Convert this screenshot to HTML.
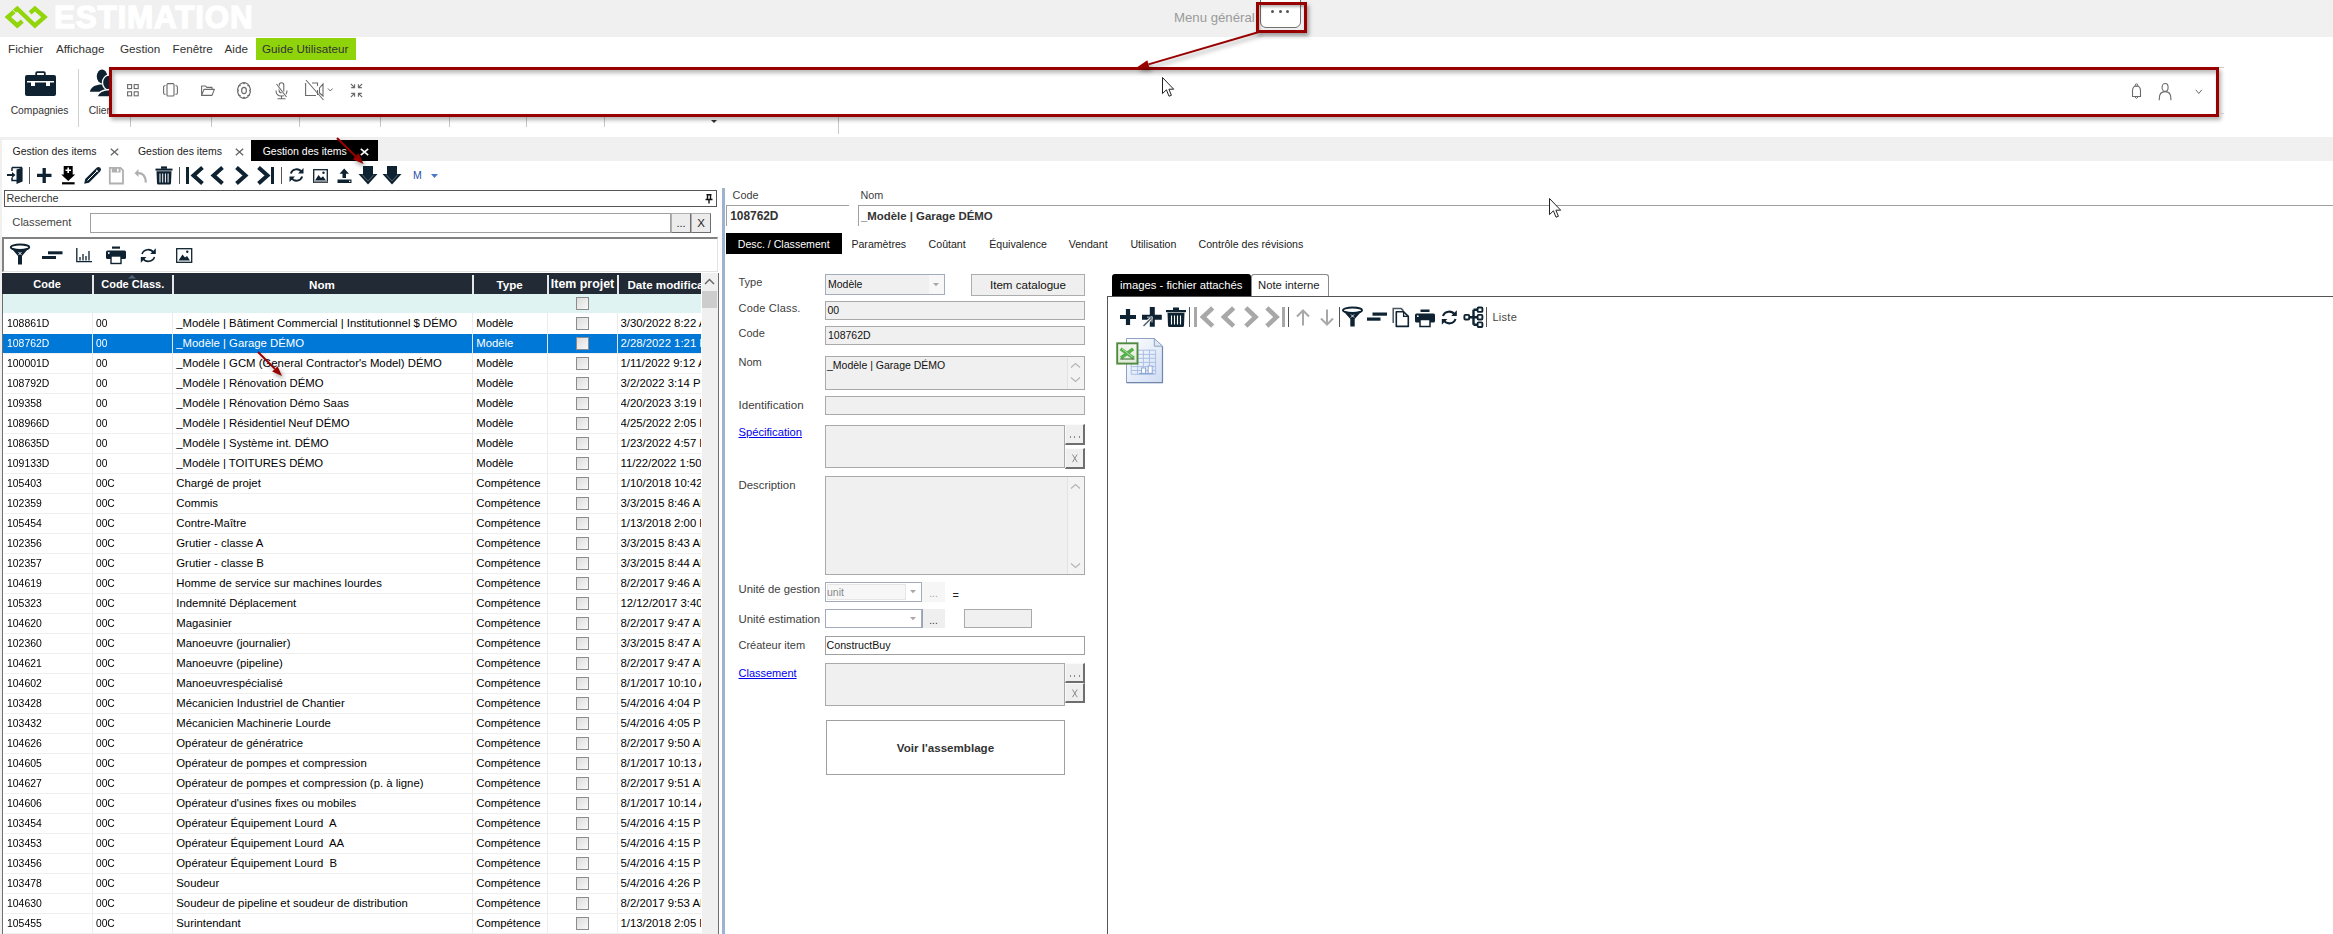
<!DOCTYPE html>
<html><head><meta charset="utf-8"><style>
html,body{margin:0;padding:0;}
body{width:2333px;height:934px;position:relative;overflow:hidden;background:#fff;font-family:"Liberation Sans",sans-serif;}
.t{position:absolute;white-space:pre;line-height:1;}
svg{overflow:visible}
</style></head><body>
<div style="position:absolute;left:0px;top:0px;width:2333px;height:37px;background:#f0f0f0"></div><svg style="position:absolute;left:0px;top:0px;" width="52" height="34" viewBox="0 0 52 34"><g fill="none" stroke="#92d50a" stroke-width="4.4" stroke-linejoin="miter" stroke-miterlimit="6"><polyline points="22.3,21.2 17.3,25.5 7.9,17.1 17.3,8.7 34.9,25.5 44.5,17.1 34.9,8.7 30.1,12.9"/></g><path d="M12.6,9.9 L16.6,13.6 M27.2,12.4 L31.4,15.8" stroke="#f0f0f0" stroke-width="0.9"/></svg><div class="t" style="left:54px;top:1.53px;font-size:31.5px;color:#ffffff;font-weight:700;-webkit-text-stroke:1.4px #fff;letter-spacing:0.75px">ESTIMATION</div><div class="t" style="left:1174px;top:10.82px;font-size:13.2px;color:#9a9a9a;font-weight:400;">Menu général</div><div style="position:absolute;left:1260px;top:-3px;width:41px;height:31px;background:#fff;border:1px solid #707070;border-radius:0 0 6px 6px;box-sizing:border-box"></div><div style="position:absolute;left:1271.0px;top:10px;width:3px;height:3px;background:#555;border-radius:50%"></div><div style="position:absolute;left:1278.5px;top:10px;width:3px;height:3px;background:#555;border-radius:50%"></div><div style="position:absolute;left:1286.0px;top:10px;width:3px;height:3px;background:#555;border-radius:50%"></div><div style="position:absolute;left:0px;top:37px;width:2333px;height:25px;background:#fff"></div><div class="t" style="left:8px;top:42.79px;font-size:11.7px;color:#333;font-weight:400;">Fichier</div><div class="t" style="left:56px;top:42.79px;font-size:11.7px;color:#333;font-weight:400;">Affichage</div><div class="t" style="left:120px;top:42.79px;font-size:11.7px;color:#333;font-weight:400;">Gestion</div><div class="t" style="left:172.5px;top:42.79px;font-size:11.7px;color:#333;font-weight:400;">Fenêtre</div><div class="t" style="left:224.5px;top:42.79px;font-size:11.7px;color:#333;font-weight:400;">Aide</div><div style="position:absolute;left:256px;top:38px;width:100px;height:22px;background:#8fd40a"></div><div class="t" style="left:262px;top:42.79px;font-size:11.7px;color:#333;font-weight:400;">Guide Utilisateur</div><div style="position:absolute;left:0px;top:62px;width:2333px;height:75px;background:#fff"></div><svg style="position:absolute;left:25px;top:71px;" width="31" height="25" viewBox="0 0 31 25"><rect x="0" y="4" width="31" height="21" rx="2" fill="#0e2231"/><rect x="11.2" y="1.1" width="8.6" height="4" rx="1" fill="none" stroke="#0e2231" stroke-width="1.8"/><rect x="2" y="10" width="27" height="1.5" fill="#fff"/><rect x="6" y="10" width="4" height="5" fill="#fff"/><rect x="21" y="10" width="4" height="5" fill="#fff"/></svg><div class="t" style="left:10.7px;top:106.08px;font-size:10.3px;color:#333;font-weight:400;">Compagnies</div><div style="position:absolute;left:78px;top:69px;width:1px;height:58px;background:#d0d0d0"></div><svg style="position:absolute;left:80px;top:62px;" width="45" height="40" viewBox="0 0 45 40"><ellipse cx="22" cy="14.4" rx="5.2" ry="7" fill="#0e2231"/><path d="M9.8,29.8 C11.5,24.5 16,22.6 22,22.6 C28,22.6 32,24.5 34,29.8 Z" fill="#0e2231"/><ellipse cx="28.8" cy="20.6" rx="6.3" ry="7.4" fill="#0e2231" stroke="#fff" stroke-width="1.3"/><path d="M16.6,35 C18.5,29.5 23.5,27.5 30,27.5 C36.5,27.5 41.5,29.5 43.4,35 Z" fill="#0e2231" stroke="#fff" stroke-width="1.3"/></svg><div class="t" style="left:88.7px;top:106.08px;font-size:10.3px;color:#333;font-weight:400;">Clients</div><div style="position:absolute;left:130px;top:117px;width:1px;height:10px;background:#c8c8c8"></div><div style="position:absolute;left:211px;top:117px;width:1px;height:10px;background:#c8c8c8"></div><div style="position:absolute;left:299px;top:117px;width:1px;height:10px;background:#c8c8c8"></div><div style="position:absolute;left:380px;top:117px;width:1px;height:10px;background:#c8c8c8"></div><div style="position:absolute;left:449px;top:117px;width:1px;height:10px;background:#c8c8c8"></div><div style="position:absolute;left:526px;top:117px;width:1px;height:10px;background:#c8c8c8"></div><div style="position:absolute;left:604px;top:117px;width:1px;height:10px;background:#c8c8c8"></div><div style="position:absolute;left:838px;top:117px;width:1px;height:17px;background:#c8c8c8"></div><svg style="position:absolute;left:711px;top:120px;" width="6" height="4" viewBox="0 0 6 4"><path d="M0,0 L6,0 L3,3 Z" fill="#333"/></svg><div style="position:absolute;left:109px;top:67px;width:2110px;height:50px;border:3px solid #980000;box-sizing:border-box;background:#fff;box-shadow:2px 3px 4px rgba(0,0,0,0.3), inset 2px 3px 4px rgba(0,0,0,0.28)"></div><svg style="position:absolute;left:127px;top:84px;" width="12" height="13" viewBox="0 0 12 13"><rect x="0.6" y="0.6" width="4" height="4" fill="none" stroke="#6a6a6a" stroke-width="1.1"/><rect x="0.6" y="7.8" width="4" height="4" fill="none" stroke="#6a6a6a" stroke-width="1.1"/><rect x="7.2" y="0.6" width="4" height="4" fill="none" stroke="#6a6a6a" stroke-width="1.1"/><rect x="7.2" y="7.8" width="4" height="4" fill="none" stroke="#6a6a6a" stroke-width="1.1"/></svg><svg style="position:absolute;left:163px;top:83px;" width="15" height="14" viewBox="0 0 15 14"><rect x="4" y="0.6" width="7" height="12.4" rx="1" fill="none" stroke="#6a6a6a" stroke-width="1.1"/><path d="M2.5,2.5 Q0.6,2.5 0.6,4 L0.6,10 Q0.6,11.4 2.5,11.4 M12.5,2.5 Q14.4,2.5 14.4,4 L14.4,10 Q14.4,11.4 12.5,11.4" fill="none" stroke="#6a6a6a" stroke-width="1.1"/></svg><svg style="position:absolute;left:201px;top:85px;" width="14" height="11" viewBox="0 0 14 11"><path d="M0.6,10.4 L0.6,1 L4.5,1 L5.8,2.4 L11,2.4 L11,4.4 M0.6,10.4 L3,4.4 L13.4,4.4 L11,10.4 Z" fill="none" stroke="#6a6a6a" stroke-width="1.1" stroke-linejoin="round"/></svg><svg style="position:absolute;left:237px;top:82px;" width="14" height="17" viewBox="0 0 14 17"><path d="M7.74,0.59 L11.11,2.28 L11.27,3.91 L10.81,3.35 L12.16,3.54 L13.55,7.61 L12.71,8.90 L12.71,8.10 L13.55,9.39 L12.16,13.46 L10.81,13.65 L11.27,13.09 L11.11,14.72 L7.74,16.41 L6.67,15.39 L7.33,15.39 L6.26,16.41 L2.89,14.72 L2.73,13.09 L3.19,13.65 L1.84,13.46 L0.45,9.39 L1.29,8.10 L1.29,8.90 L0.45,7.61 L1.84,3.54 L3.19,3.35 L2.73,3.91 L2.89,2.28 L6.26,0.59 L7.33,1.61 L6.67,1.61 Z" fill="none" stroke="#6a6a6a" stroke-width="1.15" stroke-linejoin="round"/><ellipse cx="7" cy="8.5" rx="2.4" ry="3.1" fill="none" stroke="#6a6a6a" stroke-width="1.15"/></svg><svg style="position:absolute;left:275px;top:82px;" width="13" height="18" viewBox="0 0 13 18"><rect x="4.2" y="0.8" width="4.6" height="10" rx="2.3" fill="none" stroke="#6a6a6a" stroke-width="1.1"/><path d="M1,8.5 Q1,14 6.5,14 Q12,14 12,8.5" fill="none" stroke="#6a6a6a" stroke-width="1.1"/><path d="M6.5,14 L6.5,16.5 M2.5,16.8 L10.5,16.8" fill="none" stroke="#6a6a6a" stroke-width="1.1"/><path d="M1.5,2 L11.5,15" stroke="#fff" stroke-width="2.2"/><path d="M1.5,2 L11.5,15" stroke="#6a6a6a" stroke-width="1.1"/></svg><svg style="position:absolute;left:305px;top:79px;" width="31" height="23" viewBox="0 0 31 23"><path d="M0.6,4 L0.6,16.5 L11,16.5 M7,4 L12.5,4 L12.5,7 M12.5,11 L12.5,16 M18,5 L18,17 L14.5,14 L14.5,9 Z" fill="none" stroke="#6a6a6a" stroke-width="1.1"/><path d="M1,1 L18.5,21" stroke="#6a6a6a" stroke-width="1.1"/><path d="M23,9.5 L25.3,12 L27.6,9.5" fill="none" stroke="#6a6a6a" stroke-width="1"/></svg><svg style="position:absolute;left:350px;top:83px;" width="13" height="15" viewBox="0 0 13 15"><path d="M0.8,0.8 L4.5,4.5 M1.2,4.6 L4.6,4.6 L4.6,1.2 M12.2,0.8 L8.5,4.5 M11.8,4.6 L8.4,4.6 L8.4,1.2 M0.8,14.2 L4.5,10.5 M1.2,10.4 L4.6,10.4 L4.6,13.8 M12.2,14.2 L8.5,10.5 M11.8,10.4 L8.4,10.4 L8.4,13.8" fill="none" stroke="#6a6a6a" stroke-width="1.1"/></svg><svg style="position:absolute;left:2131px;top:83px;" width="11" height="17" viewBox="0 0 11 17"><path d="M5.5,3 Q9.5,3 9.5,8 L9.5,13.5 L1.5,13.5 L1.5,8 Q1.5,3 5.5,3 Z" fill="none" stroke="#6a6a6a" stroke-width="1.1"/><circle cx="5.5" cy="2.2" r="1.3" fill="none" stroke="#6a6a6a" stroke-width="1"/><path d="M4,14 Q5.5,16.8 7,14" fill="none" stroke="#6a6a6a" stroke-width="1"/></svg><svg style="position:absolute;left:2158px;top:82px;" width="14" height="19" viewBox="0 0 14 19"><ellipse cx="7.1" cy="5.4" rx="3" ry="3.9" fill="none" stroke="#6a6a6a" stroke-width="1.1"/><path d="M1.3,18.2 L1.3,16.5 Q1.3,9.6 7.1,9.6 Q12.9,9.6 12.9,16.5 L12.9,18.2" fill="none" stroke="#6a6a6a" stroke-width="1.1"/></svg><svg style="position:absolute;left:2194.5px;top:88.7px;" width="8" height="6" viewBox="0 0 8 6"><path d="M0.8,0.8 L3.8,4.5 L6.8,0.8" fill="none" stroke="#6a6a6a" stroke-width="1"/></svg><div style="position:absolute;left:2219px;top:67px;width:5px;height:1px;background:#ccc"></div><div style="position:absolute;left:2219px;top:113px;width:5px;height:1px;background:#ccc"></div><div style="position:absolute;left:1256px;top:2px;width:51px;height:31px;border:3px solid #980000;box-sizing:border-box;box-shadow:2px 3px 4px rgba(0,0,0,0.35), inset 1px 2px 3px rgba(0,0,0,0.3)"></div><div style="position:absolute;left:0px;top:137px;width:2333px;height:24px;background:#f0f0f0"></div><div style="position:absolute;left:2px;top:140px;width:249px;height:21px;background:#fff"></div><div class="t" style="left:12.5px;top:145.81px;font-size:10.5px;color:#222;font-weight:400;">Gestion des items</div><div class="t" style="left:137.9px;top:145.81px;font-size:10.5px;color:#222;font-weight:400;">Gestion des items</div><svg style="position:absolute;left:110px;top:148px;" width="9" height="8" viewBox="0 0 9 8"><path d="M0.8,0.8 L8.2,7.2 M8.2,0.8 L0.8,7.2" stroke="#666" stroke-width="1.3"/></svg><svg style="position:absolute;left:235px;top:148px;" width="9" height="8" viewBox="0 0 9 8"><path d="M0.8,0.8 L8.2,7.2 M8.2,0.8 L0.8,7.2" stroke="#666" stroke-width="1.3"/></svg><div style="position:absolute;left:251px;top:140px;width:127px;height:21px;background:#000"></div><div class="t" style="left:262.7px;top:145.81px;font-size:10.5px;color:#fff;font-weight:400;">Gestion des items</div><svg style="position:absolute;left:360px;top:148px;" width="9" height="8" viewBox="0 0 9 8"><path d="M0.8,0.8 L8.2,7.2 M8.2,0.8 L0.8,7.2" stroke="#fff" stroke-width="1.6"/></svg><div style="position:absolute;left:0px;top:161px;width:721px;height:773px;background:#fff"></div><div style="position:absolute;left:0px;top:161px;width:2px;height:773px;background:#f0f0f0"></div><svg style="position:absolute;left:7px;top:166px;" width="16" height="19" viewBox="0 0 16 19"><path d="M5,1.6 L5,5 M5,11.5 L5,14.5 L10,14.5 M5,1.6 L15,1.6" fill="none" stroke="#0e2231" stroke-width="1.5"/><path d="M9.5,3.5 L15.6,1.5 L15.6,15.5 L9.5,18 Z" fill="#0e2231"/><path d="M0,9 L6,9" stroke="#0e2231" stroke-width="2"/><path d="M5,6 L8.5,9 L5,12 Z" fill="#0e2231"/></svg><div style="position:absolute;left:29px;top:167px;width:1px;height:17px;background:#555"></div><svg style="position:absolute;left:37px;top:168px;" width="15" height="15" viewBox="0 0 15 15"><path d="M7.2,0 L7.2,15 M0,7.3 L14.5,7.3" stroke="#0e2231" stroke-width="3.3"/></svg><svg style="position:absolute;left:61px;top:166px;" width="15" height="19" viewBox="0 0 15 19"><path d="M2.7,0 L11.7,0 L11.7,8.6 L14.2,8.6 L7.2,15 L0.2,8.6 L2.7,8.6 Z" fill="#000"/><path d="M7.2,1.5 L7.2,7 M4.5,4.2 L10,4.2" stroke="#fff" stroke-width="1.6"/><rect x="1" y="16.2" width="12.6" height="2.2" fill="#000"/></svg><svg style="position:absolute;left:83px;top:166px;" width="19" height="19" viewBox="0 0 19 19"><path d="M1.2,17.8 L2.2,13 L13.6,1.8 Q15.5,0 17.3,1.8 Q19,3.6 17.2,5.4 L6,16.8 Z" fill="#0e2231"/><path d="M4.5,14.5 L14.5,4.5" stroke="#fff" stroke-width="1"/><path d="M13,3.8 L15.3,6" stroke="#fff" stroke-width="0.9"/></svg><svg style="position:absolute;left:109px;top:167px;" width="15" height="18" viewBox="0 0 15 18"><path d="M0.8,0.8 L11.5,0.8 L14,3.3 L14,16.5 L0.8,16.5 Z" fill="none" stroke="#b0b0b0" stroke-width="1.8"/><rect x="2.8" y="1" width="8.8" height="4.5" fill="#b0b0b0"/><rect x="8" y="1.8" width="1.6" height="2.8" fill="#fff"/></svg><svg style="position:absolute;left:134px;top:167px;" width="13" height="17" viewBox="0 0 13 17"><path d="M4.5,2 L0.5,6.2 L4.5,10 Z" fill="#b0b0b0"/><path d="M3.5,6.2 Q11.5,5.5 11.8,15.5" fill="none" stroke="#b0b0b0" stroke-width="2.2"/></svg><svg style="position:absolute;left:155px;top:166px;" width="18" height="19" viewBox="0 0 18 19"><rect x="0.5" y="2.6" width="17" height="2" fill="#0e2231"/><rect x="6" y="0.4" width="6" height="2.4" fill="#0e2231"/><path d="M1.5,5.2 L16.5,5.2 L16,17.2 Q16,18.4 14.8,18.4 L3.2,18.4 Q2,18.4 2,17.2 Z" fill="#0e2231"/><path d="M5,7.5 L5,16.5 M7.7,7.5 L7.7,16.5 M10.4,7.5 L10.4,16.5 M13.1,7.5 L13.1,16.5" stroke="#fff" stroke-width="1"/></svg><div style="position:absolute;left:179px;top:167px;width:1px;height:17px;background:#555"></div><svg style="position:absolute;left:186px;top:167px;" width="18" height="17" viewBox="0 0 18 17"><rect x="0" y="0" width="3" height="17" fill="#0e2231"/><path d="M15,1.8 L7.5,8.5 L15,15.2" fill="none" stroke="#0e2231" stroke-width="4.0" stroke-linecap="square"/></svg><svg style="position:absolute;left:211px;top:167px;" width="13" height="17" viewBox="0 0 13 17"><path d="M10,1.8 L2.5,8.5 L10,15.2" fill="none" stroke="#0e2231" stroke-width="4.0" stroke-linecap="square"/></svg><svg style="position:absolute;left:236px;top:167px;" width="12" height="17" viewBox="0 0 12 17"><path d="M2,1.8 L9.5,8.5 L2,15.2" fill="none" stroke="#0e2231" stroke-width="4.0" stroke-linecap="square"/></svg><svg style="position:absolute;left:258px;top:167px;" width="16" height="17" viewBox="0 0 16 17"><path d="M2,1.8 L9.5,8.5 L2,15.2" fill="none" stroke="#0e2231" stroke-width="4.0" stroke-linecap="square"/><rect x="13" y="0" width="3" height="17" fill="#0e2231"/></svg><div style="position:absolute;left:281px;top:167px;width:1px;height:17px;background:#555"></div><svg style="position:absolute;left:289px;top:167px;" width="15" height="16" viewBox="0 0 15 16"><path d="M12.5,5 A6,6 0 0 0 1.8,6.5 M2.5,11 A6,6 0 0 0 13.2,9.5" fill="none" stroke="#0e2231" stroke-width="1.9"/><path d="M14.5,1 L14.5,6.5 L9,6.5 Z" fill="#0e2231"/><path d="M0.5,15 L0.5,9.5 L6,9.5 Z" fill="#0e2231"/></svg><svg style="position:absolute;left:313px;top:169px;" width="15" height="14" viewBox="0 0 15 14"><rect x="0.7" y="0.7" width="13.6" height="12.6" fill="none" stroke="#0e2231" stroke-width="1.3"/><path d="M2,11.5 L5.5,6 L8,9 L10,7.2 L13,11.5 Z" fill="#0e2231"/><circle cx="10.5" cy="3.8" r="1.2" fill="#0e2231"/><rect x="1" y="12" width="13.5" height="1.4" fill="#888"/></svg><svg style="position:absolute;left:337px;top:168px;" width="15" height="16" viewBox="0 0 15 16"><path d="M7.2,0.5 L12,5.8 L9,5.8 L9,10 L5.5,10 L5.5,5.8 L2.5,5.8 Z" fill="#0e2231"/><rect x="0.5" y="11.5" width="14" height="3.5" fill="#0e2231"/><rect x="12" y="12.7" width="1.4" height="1.2" fill="#fff"/></svg><svg style="position:absolute;left:359px;top:166px;" width="19" height="19" viewBox="0 0 19 19"><path d="M4,0 L14,0 L14,8 L18.5,8 L9,18.5 L-0.5,8 L4,8 Z" fill="#0e2231"/><path d="M3,8.5 L9,15 L15,8.5" fill="none" stroke="#fff" stroke-width="0.6" opacity="0.5"/><path d="M3.5,0 L3.5,8" stroke="#fff" stroke-width="0.6" opacity="0.6"/></svg><svg style="position:absolute;left:383px;top:166px;" width="19" height="19" viewBox="0 0 19 19"><path d="M4,0 L14,0 L14,8 L18.5,8 L9,18.5 L-0.5,8 L4,8 Z" fill="#0e2231"/><path d="M3,8.5 L9,15 L15,8.5" fill="none" stroke="#fff" stroke-width="0.6" opacity="0.5"/><path d="M3.5,0 L3.5,8" stroke="#fff" stroke-width="0.6" opacity="0.6"/></svg><div class="t" style="left:413px;top:170.31px;font-size:10.5px;color:#2a4fa8;font-weight:400;">M</div><svg style="position:absolute;left:431px;top:174px;" width="8" height="5" viewBox="0 0 8 5"><path d="M0,0 L7,0 L3.5,4 Z" fill="#4a78c8"/></svg><div style="position:absolute;left:4px;top:190px;width:713px;height:17px;border:1px solid #555;box-sizing:border-box;background:#fff"></div><div class="t" style="left:6.4px;top:192.86px;font-size:10.8px;color:#333;font-weight:400;">Recherche</div><svg style="position:absolute;left:705px;top:194px;" width="8" height="10" viewBox="0 0 8 10"><path d="M1.5,0.8 L6.5,0.8 M2.5,0.8 L2.5,5.5 M5.5,0.8 L5.5,5.5 M0.5,5.5 L7.5,5.5 M4,5.5 L4,9.5" fill="none" stroke="#111" stroke-width="1.4"/></svg><div class="t" style="left:12.3px;top:216.52px;font-size:11.2px;color:#444;font-weight:400;">Classement</div><div style="position:absolute;left:90px;top:213px;width:581px;height:20px;border:1px solid #a0a0a0;box-sizing:border-box;background:#fff"></div><div style="position:absolute;left:671px;top:213px;width:20px;height:20px;background:#ececec;border:1px solid #b0b0b0;border-right-color:#6e6e6e;border-bottom-color:#6e6e6e;box-sizing:border-box"></div><div class="t" style="left:481.0px;width:400px;text-align:center;top:218.19px;font-size:11px;color:#222;font-weight:400;">...</div><div style="position:absolute;left:691px;top:213px;width:20px;height:20px;background:#ececec;border:1px solid #b0b0b0;border-right-color:#6e6e6e;border-bottom-color:#6e6e6e;box-sizing:border-box"></div><div class="t" style="left:501.0px;width:400px;text-align:center;top:217.76px;font-size:11.5px;color:#222;font-weight:400;">X</div><div style="position:absolute;left:2px;top:237px;width:716px;height:35px;border-top:2px solid #828282;border-left:2px solid #828282;border-right:1px solid #e3e3e3;border-bottom:1px solid #e3e3e3;box-sizing:border-box;background:#fff"></div><svg style="position:absolute;left:10px;top:244px;" width="21" height="21" viewBox="0 0 21 21"><ellipse cx="10" cy="3.2" rx="9.3" ry="2.7" fill="none" stroke="#0e2231" stroke-width="1.8"/><path d="M0.8,3.4 L8,12 L8,20.5 L12,20.5 L12,12 L19.2,3.4 Q10,7.5 0.8,3.4 Z" fill="#0e2231"/><path d="M8.5,8 L11.5,11 M11.5,8 L8.5,11" stroke="#fff" stroke-width="0.9"/></svg><svg style="position:absolute;left:42px;top:251px;" width="21" height="9" viewBox="0 0 21 9"><rect x="6" y="0.3" width="14.5" height="3" fill="#0e2231"/><rect x="0" y="5" width="14" height="3" fill="#0e2231"/></svg><svg style="position:absolute;left:76px;top:248px;" width="17" height="15" viewBox="0 0 17 15"><path d="M0.8,0 L0.8,13.6 L16,13.6" fill="none" stroke="#0e2231" stroke-width="1.3"/><path d="M4,12.5 L4,9 M7,12.5 L7,6 M10,12.5 L10,8 M13,12.5 L13,3" stroke="#0e2231" stroke-width="1.3"/></svg><svg style="position:absolute;left:106px;top:246px;" width="20" height="18" viewBox="0 0 20 18"><rect x="6" y="0.5" width="8" height="2.2" fill="#0e2231"/><rect x="0" y="4.5" width="20" height="8.5" rx="1.5" fill="#0e2231"/><rect x="5" y="10" width="10" height="7.5" fill="#fff" stroke="#0e2231" stroke-width="1.4"/><circle cx="2.8" cy="7" r="0.9" fill="#fff"/></svg><svg style="position:absolute;left:140px;top:247px;" width="17" height="17" viewBox="0 0 17 17"><path d="M13.5,5.5 A6.5,6.5 0 0 0 2,7 M3,11.5 A6.5,6.5 0 0 0 14.5,10" fill="none" stroke="#0e2231" stroke-width="1.6"/><path d="M15.8,1.3 L15.8,7 L10.2,7 Z" fill="#0e2231"/><path d="M0.8,15.7 L0.8,10 L6.4,10 Z" fill="#0e2231"/></svg><svg style="position:absolute;left:176px;top:248px;" width="17" height="15" viewBox="0 0 17 15"><rect x="0.7" y="0.7" width="15" height="13.6" fill="none" stroke="#0e2231" stroke-width="1.3"/><path d="M2.5,12.5 L6.5,6.5 L9,9.5 L11,8 L14,12.5 Z" fill="#0e2231"/><circle cx="11.3" cy="3.8" r="1.2" fill="#0e2231"/></svg><div style="position:absolute;left:2px;top:273px;width:699px;height:21px;background:#222a35"></div><div style="position:absolute;left:92px;top:275px;width:1.5px;height:19px;background:#e4e6ea"></div><div style="position:absolute;left:172px;top:275px;width:1.5px;height:19px;background:#e4e6ea"></div><div style="position:absolute;left:472px;top:275px;width:1.5px;height:19px;background:#e4e6ea"></div><div style="position:absolute;left:547px;top:275px;width:1.5px;height:19px;background:#e4e6ea"></div><div style="position:absolute;left:617px;top:275px;width:1.5px;height:19px;background:#e4e6ea"></div><div class="t" style="left:-153px;width:400px;text-align:center;top:279.29px;font-size:11px;color:#fff;font-weight:700;">Code</div><div class="t" style="left:-67.30000000000001px;width:400px;text-align:center;top:279.29px;font-size:11px;color:#fff;font-weight:700;">Code Class.</div><div class="t" style="left:122px;width:400px;text-align:center;top:278.78px;font-size:11.6px;color:#fff;font-weight:700;">Nom</div><div class="t" style="left:309.6px;width:400px;text-align:center;top:278.78px;font-size:11.6px;color:#fff;font-weight:700;">Type</div><div class="t" style="left:382.5px;width:400px;text-align:center;top:278.10px;font-size:12.4px;color:#fff;font-weight:700;">Item projet</div><div class="t" style="left:627.5px;top:278.78px;width:73.5px;overflow:hidden;font-size:11.6px;color:#fff;font-weight:700">Date modifica</div><svg style="position:absolute;left:128px;top:275px;" width="8" height="4" viewBox="0 0 8 4"><path d="M0,3.5 L4,0 L8,3.5 Z" fill="#4d6478"/></svg><div style="position:absolute;left:2px;top:294px;width:699px;height:19px;background:#dff3f2"></div><div style="position:absolute;left:576px;top:297px;width:13px;height:13px;border:1px solid #8c8c8c;box-sizing:border-box;background:linear-gradient(135deg,#dcdcdc,#f8f8f8)"></div><div class="t" style="left:6.7px;top:317.59px;font-size:11.35px;color:#000;font-weight:400;transform:scaleX(0.92);transform-origin:0 0">108861D</div><div class="t" style="left:96.4px;top:317.59px;font-size:11.35px;color:#000;font-weight:400;transform:scaleX(0.9);transform-origin:0 0">00</div><div class="t" style="left:176.3px;top:317.59px;font-size:11.35px;color:#000;font-weight:400;white-space:pre">_Modèle | Bâtiment Commercial | Institutionnel $ DÉMO</div><div class="t" style="left:476.2px;top:317.59px;font-size:11.35px;color:#000;font-weight:400;">Modèle</div><div class="t" style="left:620.5px;top:317.59px;width:80.5px;overflow:hidden;font-size:11.35px;color:#000">3/30/2022 8:22 AM</div><div style="position:absolute;left:576px;top:317px;width:13px;height:13px;border:1px solid #8c8c8c;box-sizing:border-box;background:linear-gradient(135deg,#dcdcdc,#f8f8f8)"></div><div style="position:absolute;left:2px;top:334px;width:699px;height:19px;background:#0078d7"></div><div class="t" style="left:6.7px;top:337.59px;font-size:11.35px;color:#fff;font-weight:400;transform:scaleX(0.92);transform-origin:0 0">108762D</div><div class="t" style="left:96.4px;top:337.59px;font-size:11.35px;color:#fff;font-weight:400;transform:scaleX(0.9);transform-origin:0 0">00</div><div class="t" style="left:176.3px;top:337.59px;font-size:11.35px;color:#fff;font-weight:400;white-space:pre">_Modèle | Garage DÉMO</div><div class="t" style="left:476.2px;top:337.59px;font-size:11.35px;color:#fff;font-weight:400;">Modèle</div><div class="t" style="left:620.5px;top:337.59px;width:80.5px;overflow:hidden;font-size:11.35px;color:#fff">2/28/2022 1:21 PM</div><div style="position:absolute;left:576px;top:337px;width:13px;height:13px;border:1px solid #8c8c8c;box-sizing:border-box;background:linear-gradient(135deg,#dcdcdc,#f8f8f8)"></div><div style="position:absolute;left:4px;top:353px;width:697px;height:1px;background:#efefef"></div><div class="t" style="left:6.7px;top:357.59px;font-size:11.35px;color:#000;font-weight:400;transform:scaleX(0.92);transform-origin:0 0">100001D</div><div class="t" style="left:96.4px;top:357.59px;font-size:11.35px;color:#000;font-weight:400;transform:scaleX(0.9);transform-origin:0 0">00</div><div class="t" style="left:176.3px;top:357.59px;font-size:11.35px;color:#000;font-weight:400;white-space:pre">_Modèle | GCM (General Contractor&#x27;s Model) DÉMO</div><div class="t" style="left:476.2px;top:357.59px;font-size:11.35px;color:#000;font-weight:400;">Modèle</div><div class="t" style="left:620.5px;top:357.59px;width:80.5px;overflow:hidden;font-size:11.35px;color:#000">1/11/2022 9:12 AM</div><div style="position:absolute;left:576px;top:357px;width:13px;height:13px;border:1px solid #8c8c8c;box-sizing:border-box;background:linear-gradient(135deg,#dcdcdc,#f8f8f8)"></div><div style="position:absolute;left:4px;top:373px;width:697px;height:1px;background:#efefef"></div><div class="t" style="left:6.7px;top:377.59px;font-size:11.35px;color:#000;font-weight:400;transform:scaleX(0.92);transform-origin:0 0">108792D</div><div class="t" style="left:96.4px;top:377.59px;font-size:11.35px;color:#000;font-weight:400;transform:scaleX(0.9);transform-origin:0 0">00</div><div class="t" style="left:176.3px;top:377.59px;font-size:11.35px;color:#000;font-weight:400;white-space:pre">_Modèle | Rénovation DÉMO</div><div class="t" style="left:476.2px;top:377.59px;font-size:11.35px;color:#000;font-weight:400;">Modèle</div><div class="t" style="left:620.5px;top:377.59px;width:80.5px;overflow:hidden;font-size:11.35px;color:#000">3/2/2022 3:14 PM</div><div style="position:absolute;left:576px;top:377px;width:13px;height:13px;border:1px solid #8c8c8c;box-sizing:border-box;background:linear-gradient(135deg,#dcdcdc,#f8f8f8)"></div><div style="position:absolute;left:4px;top:393px;width:697px;height:1px;background:#efefef"></div><div class="t" style="left:6.7px;top:397.59px;font-size:11.35px;color:#000;font-weight:400;transform:scaleX(0.92);transform-origin:0 0">109358</div><div class="t" style="left:96.4px;top:397.59px;font-size:11.35px;color:#000;font-weight:400;transform:scaleX(0.9);transform-origin:0 0">00</div><div class="t" style="left:176.3px;top:397.59px;font-size:11.35px;color:#000;font-weight:400;white-space:pre">_Modèle | Rénovation Démo Saas</div><div class="t" style="left:476.2px;top:397.59px;font-size:11.35px;color:#000;font-weight:400;">Modèle</div><div class="t" style="left:620.5px;top:397.59px;width:80.5px;overflow:hidden;font-size:11.35px;color:#000">4/20/2023 3:19 PM</div><div style="position:absolute;left:576px;top:397px;width:13px;height:13px;border:1px solid #8c8c8c;box-sizing:border-box;background:linear-gradient(135deg,#dcdcdc,#f8f8f8)"></div><div style="position:absolute;left:4px;top:413px;width:697px;height:1px;background:#efefef"></div><div class="t" style="left:6.7px;top:417.59px;font-size:11.35px;color:#000;font-weight:400;transform:scaleX(0.92);transform-origin:0 0">108966D</div><div class="t" style="left:96.4px;top:417.59px;font-size:11.35px;color:#000;font-weight:400;transform:scaleX(0.9);transform-origin:0 0">00</div><div class="t" style="left:176.3px;top:417.59px;font-size:11.35px;color:#000;font-weight:400;white-space:pre">_Modèle | Résidentiel Neuf DÉMO</div><div class="t" style="left:476.2px;top:417.59px;font-size:11.35px;color:#000;font-weight:400;">Modèle</div><div class="t" style="left:620.5px;top:417.59px;width:80.5px;overflow:hidden;font-size:11.35px;color:#000">4/25/2022 2:05 PM</div><div style="position:absolute;left:576px;top:417px;width:13px;height:13px;border:1px solid #8c8c8c;box-sizing:border-box;background:linear-gradient(135deg,#dcdcdc,#f8f8f8)"></div><div style="position:absolute;left:4px;top:433px;width:697px;height:1px;background:#efefef"></div><div class="t" style="left:6.7px;top:437.59px;font-size:11.35px;color:#000;font-weight:400;transform:scaleX(0.92);transform-origin:0 0">108635D</div><div class="t" style="left:96.4px;top:437.59px;font-size:11.35px;color:#000;font-weight:400;transform:scaleX(0.9);transform-origin:0 0">00</div><div class="t" style="left:176.3px;top:437.59px;font-size:11.35px;color:#000;font-weight:400;white-space:pre">_Modèle | Système int. DÉMO</div><div class="t" style="left:476.2px;top:437.59px;font-size:11.35px;color:#000;font-weight:400;">Modèle</div><div class="t" style="left:620.5px;top:437.59px;width:80.5px;overflow:hidden;font-size:11.35px;color:#000">1/23/2022 4:57 PM</div><div style="position:absolute;left:576px;top:437px;width:13px;height:13px;border:1px solid #8c8c8c;box-sizing:border-box;background:linear-gradient(135deg,#dcdcdc,#f8f8f8)"></div><div style="position:absolute;left:4px;top:453px;width:697px;height:1px;background:#efefef"></div><div class="t" style="left:6.7px;top:457.59px;font-size:11.35px;color:#000;font-weight:400;transform:scaleX(0.92);transform-origin:0 0">109133D</div><div class="t" style="left:96.4px;top:457.59px;font-size:11.35px;color:#000;font-weight:400;transform:scaleX(0.9);transform-origin:0 0">00</div><div class="t" style="left:176.3px;top:457.59px;font-size:11.35px;color:#000;font-weight:400;white-space:pre">_Modèle | TOITURES DÉMO</div><div class="t" style="left:476.2px;top:457.59px;font-size:11.35px;color:#000;font-weight:400;">Modèle</div><div class="t" style="left:620.5px;top:457.59px;width:80.5px;overflow:hidden;font-size:11.35px;color:#000">11/22/2022 1:50 PM</div><div style="position:absolute;left:576px;top:457px;width:13px;height:13px;border:1px solid #8c8c8c;box-sizing:border-box;background:linear-gradient(135deg,#dcdcdc,#f8f8f8)"></div><div style="position:absolute;left:4px;top:473px;width:697px;height:1px;background:#efefef"></div><div class="t" style="left:6.7px;top:477.59px;font-size:11.35px;color:#000;font-weight:400;transform:scaleX(0.92);transform-origin:0 0">105403</div><div class="t" style="left:96.4px;top:477.59px;font-size:11.35px;color:#000;font-weight:400;transform:scaleX(0.9);transform-origin:0 0">00C</div><div class="t" style="left:176.3px;top:477.59px;font-size:11.35px;color:#000;font-weight:400;white-space:pre">Chargé de projet</div><div class="t" style="left:476.2px;top:477.59px;font-size:11.35px;color:#000;font-weight:400;">Compétence</div><div class="t" style="left:620.5px;top:477.59px;width:80.5px;overflow:hidden;font-size:11.35px;color:#000">1/10/2018 10:42 AM</div><div style="position:absolute;left:576px;top:477px;width:13px;height:13px;border:1px solid #8c8c8c;box-sizing:border-box;background:linear-gradient(135deg,#dcdcdc,#f8f8f8)"></div><div style="position:absolute;left:4px;top:493px;width:697px;height:1px;background:#efefef"></div><div class="t" style="left:6.7px;top:497.59px;font-size:11.35px;color:#000;font-weight:400;transform:scaleX(0.92);transform-origin:0 0">102359</div><div class="t" style="left:96.4px;top:497.59px;font-size:11.35px;color:#000;font-weight:400;transform:scaleX(0.9);transform-origin:0 0">00C</div><div class="t" style="left:176.3px;top:497.59px;font-size:11.35px;color:#000;font-weight:400;white-space:pre">Commis</div><div class="t" style="left:476.2px;top:497.59px;font-size:11.35px;color:#000;font-weight:400;">Compétence</div><div class="t" style="left:620.5px;top:497.59px;width:80.5px;overflow:hidden;font-size:11.35px;color:#000">3/3/2015 8:46 AM</div><div style="position:absolute;left:576px;top:497px;width:13px;height:13px;border:1px solid #8c8c8c;box-sizing:border-box;background:linear-gradient(135deg,#dcdcdc,#f8f8f8)"></div><div style="position:absolute;left:4px;top:513px;width:697px;height:1px;background:#efefef"></div><div class="t" style="left:6.7px;top:517.59px;font-size:11.35px;color:#000;font-weight:400;transform:scaleX(0.92);transform-origin:0 0">105454</div><div class="t" style="left:96.4px;top:517.59px;font-size:11.35px;color:#000;font-weight:400;transform:scaleX(0.9);transform-origin:0 0">00C</div><div class="t" style="left:176.3px;top:517.59px;font-size:11.35px;color:#000;font-weight:400;white-space:pre">Contre-Maître</div><div class="t" style="left:476.2px;top:517.59px;font-size:11.35px;color:#000;font-weight:400;">Compétence</div><div class="t" style="left:620.5px;top:517.59px;width:80.5px;overflow:hidden;font-size:11.35px;color:#000">1/13/2018 2:00 PM</div><div style="position:absolute;left:576px;top:517px;width:13px;height:13px;border:1px solid #8c8c8c;box-sizing:border-box;background:linear-gradient(135deg,#dcdcdc,#f8f8f8)"></div><div style="position:absolute;left:4px;top:533px;width:697px;height:1px;background:#efefef"></div><div class="t" style="left:6.7px;top:537.59px;font-size:11.35px;color:#000;font-weight:400;transform:scaleX(0.92);transform-origin:0 0">102356</div><div class="t" style="left:96.4px;top:537.59px;font-size:11.35px;color:#000;font-weight:400;transform:scaleX(0.9);transform-origin:0 0">00C</div><div class="t" style="left:176.3px;top:537.59px;font-size:11.35px;color:#000;font-weight:400;white-space:pre">Grutier - classe A</div><div class="t" style="left:476.2px;top:537.59px;font-size:11.35px;color:#000;font-weight:400;">Compétence</div><div class="t" style="left:620.5px;top:537.59px;width:80.5px;overflow:hidden;font-size:11.35px;color:#000">3/3/2015 8:43 AM</div><div style="position:absolute;left:576px;top:537px;width:13px;height:13px;border:1px solid #8c8c8c;box-sizing:border-box;background:linear-gradient(135deg,#dcdcdc,#f8f8f8)"></div><div style="position:absolute;left:4px;top:553px;width:697px;height:1px;background:#efefef"></div><div class="t" style="left:6.7px;top:557.59px;font-size:11.35px;color:#000;font-weight:400;transform:scaleX(0.92);transform-origin:0 0">102357</div><div class="t" style="left:96.4px;top:557.59px;font-size:11.35px;color:#000;font-weight:400;transform:scaleX(0.9);transform-origin:0 0">00C</div><div class="t" style="left:176.3px;top:557.59px;font-size:11.35px;color:#000;font-weight:400;white-space:pre">Grutier - classe B</div><div class="t" style="left:476.2px;top:557.59px;font-size:11.35px;color:#000;font-weight:400;">Compétence</div><div class="t" style="left:620.5px;top:557.59px;width:80.5px;overflow:hidden;font-size:11.35px;color:#000">3/3/2015 8:44 AM</div><div style="position:absolute;left:576px;top:557px;width:13px;height:13px;border:1px solid #8c8c8c;box-sizing:border-box;background:linear-gradient(135deg,#dcdcdc,#f8f8f8)"></div><div style="position:absolute;left:4px;top:573px;width:697px;height:1px;background:#efefef"></div><div class="t" style="left:6.7px;top:577.59px;font-size:11.35px;color:#000;font-weight:400;transform:scaleX(0.92);transform-origin:0 0">104619</div><div class="t" style="left:96.4px;top:577.59px;font-size:11.35px;color:#000;font-weight:400;transform:scaleX(0.9);transform-origin:0 0">00C</div><div class="t" style="left:176.3px;top:577.59px;font-size:11.35px;color:#000;font-weight:400;white-space:pre">Homme de service sur machines lourdes</div><div class="t" style="left:476.2px;top:577.59px;font-size:11.35px;color:#000;font-weight:400;">Compétence</div><div class="t" style="left:620.5px;top:577.59px;width:80.5px;overflow:hidden;font-size:11.35px;color:#000">8/2/2017 9:46 AM</div><div style="position:absolute;left:576px;top:577px;width:13px;height:13px;border:1px solid #8c8c8c;box-sizing:border-box;background:linear-gradient(135deg,#dcdcdc,#f8f8f8)"></div><div style="position:absolute;left:4px;top:593px;width:697px;height:1px;background:#efefef"></div><div class="t" style="left:6.7px;top:597.59px;font-size:11.35px;color:#000;font-weight:400;transform:scaleX(0.92);transform-origin:0 0">105323</div><div class="t" style="left:96.4px;top:597.59px;font-size:11.35px;color:#000;font-weight:400;transform:scaleX(0.9);transform-origin:0 0">00C</div><div class="t" style="left:176.3px;top:597.59px;font-size:11.35px;color:#000;font-weight:400;white-space:pre">Indemnité Déplacement</div><div class="t" style="left:476.2px;top:597.59px;font-size:11.35px;color:#000;font-weight:400;">Compétence</div><div class="t" style="left:620.5px;top:597.59px;width:80.5px;overflow:hidden;font-size:11.35px;color:#000">12/12/2017 3:40 PM</div><div style="position:absolute;left:576px;top:597px;width:13px;height:13px;border:1px solid #8c8c8c;box-sizing:border-box;background:linear-gradient(135deg,#dcdcdc,#f8f8f8)"></div><div style="position:absolute;left:4px;top:613px;width:697px;height:1px;background:#efefef"></div><div class="t" style="left:6.7px;top:617.59px;font-size:11.35px;color:#000;font-weight:400;transform:scaleX(0.92);transform-origin:0 0">104620</div><div class="t" style="left:96.4px;top:617.59px;font-size:11.35px;color:#000;font-weight:400;transform:scaleX(0.9);transform-origin:0 0">00C</div><div class="t" style="left:176.3px;top:617.59px;font-size:11.35px;color:#000;font-weight:400;white-space:pre">Magasinier</div><div class="t" style="left:476.2px;top:617.59px;font-size:11.35px;color:#000;font-weight:400;">Compétence</div><div class="t" style="left:620.5px;top:617.59px;width:80.5px;overflow:hidden;font-size:11.35px;color:#000">8/2/2017 9:47 AM</div><div style="position:absolute;left:576px;top:617px;width:13px;height:13px;border:1px solid #8c8c8c;box-sizing:border-box;background:linear-gradient(135deg,#dcdcdc,#f8f8f8)"></div><div style="position:absolute;left:4px;top:633px;width:697px;height:1px;background:#efefef"></div><div class="t" style="left:6.7px;top:637.59px;font-size:11.35px;color:#000;font-weight:400;transform:scaleX(0.92);transform-origin:0 0">102360</div><div class="t" style="left:96.4px;top:637.59px;font-size:11.35px;color:#000;font-weight:400;transform:scaleX(0.9);transform-origin:0 0">00C</div><div class="t" style="left:176.3px;top:637.59px;font-size:11.35px;color:#000;font-weight:400;white-space:pre">Manoeuvre (journalier)</div><div class="t" style="left:476.2px;top:637.59px;font-size:11.35px;color:#000;font-weight:400;">Compétence</div><div class="t" style="left:620.5px;top:637.59px;width:80.5px;overflow:hidden;font-size:11.35px;color:#000">3/3/2015 8:47 AM</div><div style="position:absolute;left:576px;top:637px;width:13px;height:13px;border:1px solid #8c8c8c;box-sizing:border-box;background:linear-gradient(135deg,#dcdcdc,#f8f8f8)"></div><div style="position:absolute;left:4px;top:653px;width:697px;height:1px;background:#efefef"></div><div class="t" style="left:6.7px;top:657.59px;font-size:11.35px;color:#000;font-weight:400;transform:scaleX(0.92);transform-origin:0 0">104621</div><div class="t" style="left:96.4px;top:657.59px;font-size:11.35px;color:#000;font-weight:400;transform:scaleX(0.9);transform-origin:0 0">00C</div><div class="t" style="left:176.3px;top:657.59px;font-size:11.35px;color:#000;font-weight:400;white-space:pre">Manoeuvre (pipeline)</div><div class="t" style="left:476.2px;top:657.59px;font-size:11.35px;color:#000;font-weight:400;">Compétence</div><div class="t" style="left:620.5px;top:657.59px;width:80.5px;overflow:hidden;font-size:11.35px;color:#000">8/2/2017 9:47 AM</div><div style="position:absolute;left:576px;top:657px;width:13px;height:13px;border:1px solid #8c8c8c;box-sizing:border-box;background:linear-gradient(135deg,#dcdcdc,#f8f8f8)"></div><div style="position:absolute;left:4px;top:673px;width:697px;height:1px;background:#efefef"></div><div class="t" style="left:6.7px;top:677.59px;font-size:11.35px;color:#000;font-weight:400;transform:scaleX(0.92);transform-origin:0 0">104602</div><div class="t" style="left:96.4px;top:677.59px;font-size:11.35px;color:#000;font-weight:400;transform:scaleX(0.9);transform-origin:0 0">00C</div><div class="t" style="left:176.3px;top:677.59px;font-size:11.35px;color:#000;font-weight:400;white-space:pre">Manoeuvrespécialisé</div><div class="t" style="left:476.2px;top:677.59px;font-size:11.35px;color:#000;font-weight:400;">Compétence</div><div class="t" style="left:620.5px;top:677.59px;width:80.5px;overflow:hidden;font-size:11.35px;color:#000">8/1/2017 10:10 AM</div><div style="position:absolute;left:576px;top:677px;width:13px;height:13px;border:1px solid #8c8c8c;box-sizing:border-box;background:linear-gradient(135deg,#dcdcdc,#f8f8f8)"></div><div style="position:absolute;left:4px;top:693px;width:697px;height:1px;background:#efefef"></div><div class="t" style="left:6.7px;top:697.59px;font-size:11.35px;color:#000;font-weight:400;transform:scaleX(0.92);transform-origin:0 0">103428</div><div class="t" style="left:96.4px;top:697.59px;font-size:11.35px;color:#000;font-weight:400;transform:scaleX(0.9);transform-origin:0 0">00C</div><div class="t" style="left:176.3px;top:697.59px;font-size:11.35px;color:#000;font-weight:400;white-space:pre">Mécanicien Industriel de Chantier</div><div class="t" style="left:476.2px;top:697.59px;font-size:11.35px;color:#000;font-weight:400;">Compétence</div><div class="t" style="left:620.5px;top:697.59px;width:80.5px;overflow:hidden;font-size:11.35px;color:#000">5/4/2016 4:04 PM</div><div style="position:absolute;left:576px;top:697px;width:13px;height:13px;border:1px solid #8c8c8c;box-sizing:border-box;background:linear-gradient(135deg,#dcdcdc,#f8f8f8)"></div><div style="position:absolute;left:4px;top:713px;width:697px;height:1px;background:#efefef"></div><div class="t" style="left:6.7px;top:717.59px;font-size:11.35px;color:#000;font-weight:400;transform:scaleX(0.92);transform-origin:0 0">103432</div><div class="t" style="left:96.4px;top:717.59px;font-size:11.35px;color:#000;font-weight:400;transform:scaleX(0.9);transform-origin:0 0">00C</div><div class="t" style="left:176.3px;top:717.59px;font-size:11.35px;color:#000;font-weight:400;white-space:pre">Mécanicien Machinerie Lourde</div><div class="t" style="left:476.2px;top:717.59px;font-size:11.35px;color:#000;font-weight:400;">Compétence</div><div class="t" style="left:620.5px;top:717.59px;width:80.5px;overflow:hidden;font-size:11.35px;color:#000">5/4/2016 4:05 PM</div><div style="position:absolute;left:576px;top:717px;width:13px;height:13px;border:1px solid #8c8c8c;box-sizing:border-box;background:linear-gradient(135deg,#dcdcdc,#f8f8f8)"></div><div style="position:absolute;left:4px;top:733px;width:697px;height:1px;background:#efefef"></div><div class="t" style="left:6.7px;top:737.59px;font-size:11.35px;color:#000;font-weight:400;transform:scaleX(0.92);transform-origin:0 0">104626</div><div class="t" style="left:96.4px;top:737.59px;font-size:11.35px;color:#000;font-weight:400;transform:scaleX(0.9);transform-origin:0 0">00C</div><div class="t" style="left:176.3px;top:737.59px;font-size:11.35px;color:#000;font-weight:400;white-space:pre">Opérateur de génératrice</div><div class="t" style="left:476.2px;top:737.59px;font-size:11.35px;color:#000;font-weight:400;">Compétence</div><div class="t" style="left:620.5px;top:737.59px;width:80.5px;overflow:hidden;font-size:11.35px;color:#000">8/2/2017 9:50 AM</div><div style="position:absolute;left:576px;top:737px;width:13px;height:13px;border:1px solid #8c8c8c;box-sizing:border-box;background:linear-gradient(135deg,#dcdcdc,#f8f8f8)"></div><div style="position:absolute;left:4px;top:753px;width:697px;height:1px;background:#efefef"></div><div class="t" style="left:6.7px;top:757.59px;font-size:11.35px;color:#000;font-weight:400;transform:scaleX(0.92);transform-origin:0 0">104605</div><div class="t" style="left:96.4px;top:757.59px;font-size:11.35px;color:#000;font-weight:400;transform:scaleX(0.9);transform-origin:0 0">00C</div><div class="t" style="left:176.3px;top:757.59px;font-size:11.35px;color:#000;font-weight:400;white-space:pre">Opérateur de pompes et compression</div><div class="t" style="left:476.2px;top:757.59px;font-size:11.35px;color:#000;font-weight:400;">Compétence</div><div class="t" style="left:620.5px;top:757.59px;width:80.5px;overflow:hidden;font-size:11.35px;color:#000">8/1/2017 10:13 AM</div><div style="position:absolute;left:576px;top:757px;width:13px;height:13px;border:1px solid #8c8c8c;box-sizing:border-box;background:linear-gradient(135deg,#dcdcdc,#f8f8f8)"></div><div style="position:absolute;left:4px;top:773px;width:697px;height:1px;background:#efefef"></div><div class="t" style="left:6.7px;top:777.59px;font-size:11.35px;color:#000;font-weight:400;transform:scaleX(0.92);transform-origin:0 0">104627</div><div class="t" style="left:96.4px;top:777.59px;font-size:11.35px;color:#000;font-weight:400;transform:scaleX(0.9);transform-origin:0 0">00C</div><div class="t" style="left:176.3px;top:777.59px;font-size:11.35px;color:#000;font-weight:400;white-space:pre">Opérateur de pompes et compression (p. à ligne)</div><div class="t" style="left:476.2px;top:777.59px;font-size:11.35px;color:#000;font-weight:400;">Compétence</div><div class="t" style="left:620.5px;top:777.59px;width:80.5px;overflow:hidden;font-size:11.35px;color:#000">8/2/2017 9:51 AM</div><div style="position:absolute;left:576px;top:777px;width:13px;height:13px;border:1px solid #8c8c8c;box-sizing:border-box;background:linear-gradient(135deg,#dcdcdc,#f8f8f8)"></div><div style="position:absolute;left:4px;top:793px;width:697px;height:1px;background:#efefef"></div><div class="t" style="left:6.7px;top:797.59px;font-size:11.35px;color:#000;font-weight:400;transform:scaleX(0.92);transform-origin:0 0">104606</div><div class="t" style="left:96.4px;top:797.59px;font-size:11.35px;color:#000;font-weight:400;transform:scaleX(0.9);transform-origin:0 0">00C</div><div class="t" style="left:176.3px;top:797.59px;font-size:11.35px;color:#000;font-weight:400;white-space:pre">Opérateur d&#x27;usines fixes ou mobiles</div><div class="t" style="left:476.2px;top:797.59px;font-size:11.35px;color:#000;font-weight:400;">Compétence</div><div class="t" style="left:620.5px;top:797.59px;width:80.5px;overflow:hidden;font-size:11.35px;color:#000">8/1/2017 10:14 AM</div><div style="position:absolute;left:576px;top:797px;width:13px;height:13px;border:1px solid #8c8c8c;box-sizing:border-box;background:linear-gradient(135deg,#dcdcdc,#f8f8f8)"></div><div style="position:absolute;left:4px;top:813px;width:697px;height:1px;background:#efefef"></div><div class="t" style="left:6.7px;top:817.59px;font-size:11.35px;color:#000;font-weight:400;transform:scaleX(0.92);transform-origin:0 0">103454</div><div class="t" style="left:96.4px;top:817.59px;font-size:11.35px;color:#000;font-weight:400;transform:scaleX(0.9);transform-origin:0 0">00C</div><div class="t" style="left:176.3px;top:817.59px;font-size:11.35px;color:#000;font-weight:400;white-space:pre">Opérateur Équipement Lourd  A</div><div class="t" style="left:476.2px;top:817.59px;font-size:11.35px;color:#000;font-weight:400;">Compétence</div><div class="t" style="left:620.5px;top:817.59px;width:80.5px;overflow:hidden;font-size:11.35px;color:#000">5/4/2016 4:15 PM</div><div style="position:absolute;left:576px;top:817px;width:13px;height:13px;border:1px solid #8c8c8c;box-sizing:border-box;background:linear-gradient(135deg,#dcdcdc,#f8f8f8)"></div><div style="position:absolute;left:4px;top:833px;width:697px;height:1px;background:#efefef"></div><div class="t" style="left:6.7px;top:837.59px;font-size:11.35px;color:#000;font-weight:400;transform:scaleX(0.92);transform-origin:0 0">103453</div><div class="t" style="left:96.4px;top:837.59px;font-size:11.35px;color:#000;font-weight:400;transform:scaleX(0.9);transform-origin:0 0">00C</div><div class="t" style="left:176.3px;top:837.59px;font-size:11.35px;color:#000;font-weight:400;white-space:pre">Opérateur Équipement Lourd  AA</div><div class="t" style="left:476.2px;top:837.59px;font-size:11.35px;color:#000;font-weight:400;">Compétence</div><div class="t" style="left:620.5px;top:837.59px;width:80.5px;overflow:hidden;font-size:11.35px;color:#000">5/4/2016 4:15 PM</div><div style="position:absolute;left:576px;top:837px;width:13px;height:13px;border:1px solid #8c8c8c;box-sizing:border-box;background:linear-gradient(135deg,#dcdcdc,#f8f8f8)"></div><div style="position:absolute;left:4px;top:853px;width:697px;height:1px;background:#efefef"></div><div class="t" style="left:6.7px;top:857.59px;font-size:11.35px;color:#000;font-weight:400;transform:scaleX(0.92);transform-origin:0 0">103456</div><div class="t" style="left:96.4px;top:857.59px;font-size:11.35px;color:#000;font-weight:400;transform:scaleX(0.9);transform-origin:0 0">00C</div><div class="t" style="left:176.3px;top:857.59px;font-size:11.35px;color:#000;font-weight:400;white-space:pre">Opérateur Équipement Lourd  B</div><div class="t" style="left:476.2px;top:857.59px;font-size:11.35px;color:#000;font-weight:400;">Compétence</div><div class="t" style="left:620.5px;top:857.59px;width:80.5px;overflow:hidden;font-size:11.35px;color:#000">5/4/2016 4:15 PM</div><div style="position:absolute;left:576px;top:857px;width:13px;height:13px;border:1px solid #8c8c8c;box-sizing:border-box;background:linear-gradient(135deg,#dcdcdc,#f8f8f8)"></div><div style="position:absolute;left:4px;top:873px;width:697px;height:1px;background:#efefef"></div><div class="t" style="left:6.7px;top:877.59px;font-size:11.35px;color:#000;font-weight:400;transform:scaleX(0.92);transform-origin:0 0">103478</div><div class="t" style="left:96.4px;top:877.59px;font-size:11.35px;color:#000;font-weight:400;transform:scaleX(0.9);transform-origin:0 0">00C</div><div class="t" style="left:176.3px;top:877.59px;font-size:11.35px;color:#000;font-weight:400;white-space:pre">Soudeur</div><div class="t" style="left:476.2px;top:877.59px;font-size:11.35px;color:#000;font-weight:400;">Compétence</div><div class="t" style="left:620.5px;top:877.59px;width:80.5px;overflow:hidden;font-size:11.35px;color:#000">5/4/2016 4:26 PM</div><div style="position:absolute;left:576px;top:877px;width:13px;height:13px;border:1px solid #8c8c8c;box-sizing:border-box;background:linear-gradient(135deg,#dcdcdc,#f8f8f8)"></div><div style="position:absolute;left:4px;top:893px;width:697px;height:1px;background:#efefef"></div><div class="t" style="left:6.7px;top:897.59px;font-size:11.35px;color:#000;font-weight:400;transform:scaleX(0.92);transform-origin:0 0">104630</div><div class="t" style="left:96.4px;top:897.59px;font-size:11.35px;color:#000;font-weight:400;transform:scaleX(0.9);transform-origin:0 0">00C</div><div class="t" style="left:176.3px;top:897.59px;font-size:11.35px;color:#000;font-weight:400;white-space:pre">Soudeur de pipeline et soudeur de distribution</div><div class="t" style="left:476.2px;top:897.59px;font-size:11.35px;color:#000;font-weight:400;">Compétence</div><div class="t" style="left:620.5px;top:897.59px;width:80.5px;overflow:hidden;font-size:11.35px;color:#000">8/2/2017 9:53 AM</div><div style="position:absolute;left:576px;top:897px;width:13px;height:13px;border:1px solid #8c8c8c;box-sizing:border-box;background:linear-gradient(135deg,#dcdcdc,#f8f8f8)"></div><div style="position:absolute;left:4px;top:913px;width:697px;height:1px;background:#efefef"></div><div class="t" style="left:6.7px;top:917.59px;font-size:11.35px;color:#000;font-weight:400;transform:scaleX(0.92);transform-origin:0 0">105455</div><div class="t" style="left:96.4px;top:917.59px;font-size:11.35px;color:#000;font-weight:400;transform:scaleX(0.9);transform-origin:0 0">00C</div><div class="t" style="left:176.3px;top:917.59px;font-size:11.35px;color:#000;font-weight:400;white-space:pre">Surintendant</div><div class="t" style="left:476.2px;top:917.59px;font-size:11.35px;color:#000;font-weight:400;">Compétence</div><div class="t" style="left:620.5px;top:917.59px;width:80.5px;overflow:hidden;font-size:11.35px;color:#000">1/13/2018 2:05 PM</div><div style="position:absolute;left:576px;top:917px;width:13px;height:13px;border:1px solid #8c8c8c;box-sizing:border-box;background:linear-gradient(135deg,#dcdcdc,#f8f8f8)"></div><div style="position:absolute;left:92px;top:313px;width:1px;height:621px;background:#ececec"></div><div style="position:absolute;left:172px;top:313px;width:1px;height:621px;background:#ececec"></div><div style="position:absolute;left:472px;top:313px;width:1px;height:621px;background:#ececec"></div><div style="position:absolute;left:547px;top:313px;width:1px;height:621px;background:#ececec"></div><div style="position:absolute;left:617px;top:313px;width:1px;height:621px;background:#ececec"></div><div style="position:absolute;left:92px;top:334px;width:1px;height:19px;background:#e6e6e6"></div><div style="position:absolute;left:172px;top:334px;width:1px;height:19px;background:#e6e6e6"></div><div style="position:absolute;left:472px;top:334px;width:1px;height:19px;background:#e6e6e6"></div><div style="position:absolute;left:547px;top:334px;width:1px;height:19px;background:#e6e6e6"></div><div style="position:absolute;left:617px;top:334px;width:1px;height:19px;background:#e6e6e6"></div><div style="position:absolute;left:2px;top:294px;width:1px;height:640px;background:#6e6e6e"></div><div style="position:absolute;left:702px;top:273px;width:16px;height:661px;background:#f0f0f0"></div><div style="position:absolute;left:4px;top:933px;width:697px;height:1px;background:#efefef"></div><div style="position:absolute;left:718px;top:273px;width:1px;height:661px;background:#6e6e6e"></div><svg style="position:absolute;left:704px;top:278px;" width="11" height="7" viewBox="0 0 11 7"><path d="M1,6 L5.5,1.5 L10,6" fill="none" stroke="#606060" stroke-width="1.4"/></svg><div style="position:absolute;left:702px;top:291px;width:15px;height:17px;background:#cdcdcd"></div><div style="position:absolute;left:719px;top:161px;width:3px;height:773px;background:#fff"></div><div style="position:absolute;left:722px;top:188px;width:3px;height:746px;background:#9db3cf"></div><div style="position:absolute;left:725px;top:161px;width:1608px;height:773px;background:#fff"></div><div class="t" style="left:732.6px;top:189.86px;font-size:10.8px;color:#404040;font-weight:400;">Code</div><div class="t" style="left:860.4px;top:189.86px;font-size:10.8px;color:#404040;font-weight:400;">Nom</div><div style="position:absolute;left:726px;top:205px;width:123px;height:1px;background:#a0a0a0"></div><div style="position:absolute;left:726px;top:205px;width:1px;height:21px;background:#a0a0a0"></div><div style="position:absolute;left:858px;top:205px;width:1475px;height:1px;background:#a0a0a0"></div><div style="position:absolute;left:858px;top:205px;width:1px;height:21px;background:#a0a0a0"></div><div class="t" style="left:730.2px;top:210.82px;font-size:11.9px;color:#333;font-weight:700;">108762D</div><div class="t" style="left:861px;top:211.25px;font-size:11.4px;color:#333;font-weight:700;">_Modèle | Garage DÉMO</div><div style="position:absolute;left:726px;top:233px;width:116px;height:21px;background:#000"></div><div class="t" style="left:737.8px;top:239.02px;font-size:10.6px;color:#fff;font-weight:400;">Desc. / Classement</div><div class="t" style="left:851.4px;top:239.02px;font-size:10.6px;color:#222;font-weight:400;">Paramètres</div><div class="t" style="left:928.6px;top:239.02px;font-size:10.6px;color:#222;font-weight:400;">Coûtant</div><div class="t" style="left:989.2px;top:239.02px;font-size:10.6px;color:#222;font-weight:400;">Équivalence</div><div class="t" style="left:1068.7px;top:239.02px;font-size:10.6px;color:#222;font-weight:400;">Vendant</div><div class="t" style="left:1130.4px;top:239.02px;font-size:10.6px;color:#222;font-weight:400;">Utilisation</div><div class="t" style="left:1198.5px;top:239.02px;font-size:10.6px;color:#222;font-weight:400;">Contrôle des révisions</div><div class="t" style="left:738.5px;top:277.09px;font-size:11.0px;color:#404040;font-weight:400;">Type</div><div style="position:absolute;left:825px;top:274px;width:120px;height:21px;background:#f0f0f0;border:1px solid #a3acbc;box-sizing:border-box"></div><div style="position:absolute;left:929px;top:275px;width:15px;height:19px;background:#f7f7f7"></div><svg style="position:absolute;left:933px;top:283px;" width="7" height="4" viewBox="0 0 7 4"><path d="M0,0 L6,0 L3,3.2 Z" fill="#a8a8a8"/></svg><div class="t" style="left:828px;top:279.31px;font-size:10.5px;color:#111;font-weight:400;">Modèle</div><div style="position:absolute;left:971px;top:274px;width:114px;height:22px;background:#efefef;border:1px solid #adadad;box-sizing:border-box"></div><div class="t" style="left:828px;width:400px;text-align:center;top:278.78px;font-size:11.6px;color:#111;font-weight:400;">Item catalogue</div><div class="t" style="left:738.5px;top:302.99px;font-size:11.0px;color:#404040;font-weight:400;letter-spacing:0.2px">Code Class.</div><div style="position:absolute;left:825px;top:301px;width:260px;height:19px;background:#f0f0f0;border:1px solid #a9a9a9;box-sizing:border-box"></div><div class="t" style="left:827.5px;top:305.41px;font-size:10.5px;color:#111;font-weight:400;">00</div><div class="t" style="left:738.5px;top:327.89px;font-size:11.0px;color:#404040;font-weight:400;">Code</div><div style="position:absolute;left:825px;top:326px;width:260px;height:19px;background:#f0f0f0;border:1px solid #a9a9a9;box-sizing:border-box"></div><div class="t" style="left:828px;top:330.41px;font-size:10.5px;color:#111;font-weight:400;">108762D</div><div class="t" style="left:738.5px;top:356.69px;font-size:11.0px;color:#404040;font-weight:400;">Nom</div><div style="position:absolute;left:825px;top:356px;width:260px;height:34px;background:#f0f0f0;border:1px solid #a9a9a9;box-sizing:border-box"></div><div style="position:absolute;left:1067px;top:357px;width:17px;height:32px;background:#f3f3f3;border-left:1px solid #e2e2e2;box-sizing:border-box"></div><svg style="position:absolute;left:1070px;top:362px;" width="11" height="7" viewBox="0 0 11 7"><path d="M1,5.5 L5.5,1.5 L10,5.5" fill="none" stroke="#b5b5b5" stroke-width="1.2"/></svg><svg style="position:absolute;left:1070px;top:376px;" width="11" height="7" viewBox="0 0 11 7"><path d="M1,1.5 L5.5,5.5 L10,1.5" fill="none" stroke="#b5b5b5" stroke-width="1.2"/></svg><div class="t" style="left:827px;top:360.01px;font-size:10.5px;color:#111;font-weight:400;">_Modèle | Garage DÉMO</div><div class="t" style="left:738.5px;top:399.48px;font-size:11.6px;color:#404040;font-weight:400;">Identification</div><div style="position:absolute;left:825px;top:396px;width:260px;height:19px;background:#f0f0f0;border:1px solid #a9a9a9;box-sizing:border-box"></div><div class="t" style="left:738.5px;top:426.52px;font-size:11.2px;color:#0000ee;font-weight:400;text-decoration:underline">Spécification</div><div style="position:absolute;left:825px;top:425px;width:240px;height:43px;background:#f0f0f0;border:1px solid #a9a9a9;box-sizing:border-box"></div><div style="position:absolute;left:1065px;top:424px;width:20px;height:21px;background:#efefef;border-left:1px solid #fafafa;border-top:1px solid #fafafa;border-right:2px solid #6e6e6e;border-bottom:2px solid #6e6e6e;box-sizing:border-box"></div><div style="position:absolute;left:1070.2px;top:436.3px;width:1.1px;height:1.8px;background:#8a8a8a"></div><div style="position:absolute;left:1074.3500000000001px;top:436.3px;width:1.1px;height:1.8px;background:#8a8a8a"></div><div style="position:absolute;left:1078.5px;top:436.3px;width:1.1px;height:1.8px;background:#8a8a8a"></div><div style="position:absolute;left:1065px;top:448px;width:20px;height:21px;background:#efefef;border-left:1px solid #fafafa;border-top:1px solid #fafafa;border-right:2px solid #6e6e6e;border-bottom:2px solid #6e6e6e;box-sizing:border-box"></div><svg style="position:absolute;left:1071.8px;top:454.2px;" width="6" height="9" viewBox="0 0 6 9"><path d="M0.5,0.5 L5.2,8.2 M5.2,0.5 L0.5,8.2" stroke="#8a8a8a" stroke-width="1"/></svg><div class="t" style="left:738.5px;top:479.95px;font-size:11.4px;color:#404040;font-weight:400;">Description</div><div style="position:absolute;left:825px;top:476px;width:260px;height:99px;background:#f0f0f0;border:1px solid #a9a9a9;box-sizing:border-box"></div><div style="position:absolute;left:1067px;top:477px;width:17px;height:97px;background:#f3f3f3;border-left:1px solid #e2e2e2;box-sizing:border-box"></div><svg style="position:absolute;left:1070px;top:483px;" width="11" height="7" viewBox="0 0 11 7"><path d="M1,5.5 L5.5,1.5 L10,5.5" fill="none" stroke="#b5b5b5" stroke-width="1.2"/></svg><svg style="position:absolute;left:1070px;top:562px;" width="11" height="7" viewBox="0 0 11 7"><path d="M1,1.5 L5.5,5.5 L10,1.5" fill="none" stroke="#b5b5b5" stroke-width="1.2"/></svg><div class="t" style="left:738.5px;top:583.63px;font-size:11.3px;color:#404040;font-weight:400;">Unité de gestion</div><div style="position:absolute;left:825px;top:582px;width:97px;height:20px;background:#fff;border:1px solid #a3acbc;box-sizing:border-box"></div><div style="position:absolute;left:827px;top:584px;width:79px;height:16px;background:#f7f7f7;border:1px solid #e6e6e6;box-sizing:border-box"></div><svg style="position:absolute;left:910px;top:590px;" width="7" height="4" viewBox="0 0 7 4"><path d="M0,0 L6,0 L3,3.2 Z" fill="#a8a8a8"/></svg><div class="t" style="left:827px;top:586.91px;font-size:10.5px;color:#8a8a8a;font-weight:400;">unit</div><div style="position:absolute;left:922px;top:582px;width:23px;height:20px;background:#f6f6f6"></div><div class="t" style="left:733.5px;width:400px;text-align:center;top:588.53px;font-size:10px;color:#a0a0a0;font-weight:400;">...</div><div class="t" style="left:952.6px;top:590.19px;font-size:11px;color:#222;font-weight:400;">=</div><div class="t" style="left:738.5px;top:613.55px;font-size:11.4px;color:#404040;font-weight:400;">Unité estimation</div><div style="position:absolute;left:825px;top:609px;width:97px;height:19px;background:#fff;border:1px solid #a3acbc;box-sizing:border-box"></div><svg style="position:absolute;left:910px;top:617px;" width="7" height="4" viewBox="0 0 7 4"><path d="M0,0 L6,0 L3,3.2 Z" fill="#a8a8a8"/></svg><div style="position:absolute;left:922px;top:609px;width:23px;height:19px;background:#efefef;border-left:1px solid #9aa3b3;box-sizing:border-box"></div><div class="t" style="left:733.5px;width:400px;text-align:center;top:615.53px;font-size:10px;color:#333;font-weight:400;">...</div><div style="position:absolute;left:964px;top:609px;width:68px;height:19px;background:#f0f0f0;border:1px solid #a9a9a9;box-sizing:border-box"></div><div class="t" style="left:738.5px;top:639.99px;font-size:11.0px;color:#404040;font-weight:400;">Créateur item</div><div style="position:absolute;left:825px;top:636px;width:260px;height:19px;background:#fff;border:1px solid #a0a0a0;box-sizing:border-box"></div><div class="t" style="left:826.5px;top:640.14px;font-size:10.7px;color:#111;font-weight:400;">ConstructBuy</div><div class="t" style="left:738.5px;top:667.69px;font-size:11.0px;color:#0000ee;font-weight:400;text-decoration:underline">Classement</div><div style="position:absolute;left:825px;top:663px;width:240px;height:43px;background:#f0f0f0;border:1px solid #a9a9a9;box-sizing:border-box"></div><div style="position:absolute;left:1065px;top:663px;width:20px;height:20px;background:#efefef;border-left:1px solid #fafafa;border-top:1px solid #fafafa;border-right:2px solid #6e6e6e;border-bottom:2px solid #6e6e6e;box-sizing:border-box"></div><div style="position:absolute;left:1070.2px;top:674.8px;width:1.1px;height:1.8px;background:#8a8a8a"></div><div style="position:absolute;left:1074.3500000000001px;top:674.8px;width:1.1px;height:1.8px;background:#8a8a8a"></div><div style="position:absolute;left:1078.5px;top:674.8px;width:1.1px;height:1.8px;background:#8a8a8a"></div><div style="position:absolute;left:1065px;top:683px;width:20px;height:20px;background:#efefef;border-left:1px solid #fafafa;border-top:1px solid #fafafa;border-right:2px solid #6e6e6e;border-bottom:2px solid #6e6e6e;box-sizing:border-box"></div><svg style="position:absolute;left:1071.8px;top:688.7px;" width="6" height="9" viewBox="0 0 6 9"><path d="M0.5,0.5 L5.2,8.2 M5.2,0.5 L0.5,8.2" stroke="#8a8a8a" stroke-width="1"/></svg><div style="position:absolute;left:826px;top:720px;width:239px;height:55px;background:#fff;border:1px solid #a0a0a0;box-sizing:border-box"></div><div class="t" style="left:745.5px;width:400px;text-align:center;top:742.38px;font-size:11.6px;color:#333;font-weight:700;">Voir l&#x27;assemblage</div><div style="position:absolute;left:1107px;top:296px;width:1px;height:638px;background:#555"></div><div style="position:absolute;left:1112px;top:274px;width:139px;height:23px;background:#000;border-radius:3px 3px 0 0"></div><div class="t" style="left:1120px;top:279.63px;font-size:11.3px;color:#fff;font-weight:400;">images - fichier attachés</div><div style="position:absolute;left:1251px;top:274px;width:78px;height:23px;background:#fff;border:1px solid #8a8a8a;border-bottom:none;border-radius:3px 3px 0 0;box-sizing:border-box"></div><div class="t" style="left:1258px;top:279.63px;font-size:11.3px;color:#222;font-weight:400;">Note interne</div><div style="position:absolute;left:1107px;top:296px;width:1226px;height:1px;background:#555"></div><svg style="position:absolute;left:1120px;top:309px;" width="16" height="16" viewBox="0 0 16 16"><path d="M8,0 L8,16 M0,8 L16,8" stroke="#0e2231" stroke-width="4.2"/></svg><svg style="position:absolute;left:1142px;top:307px;" width="20" height="20" viewBox="0 0 20 20"><path d="M10.3,0 L10.3,19.7 M0,10.3 L19.8,10.3" stroke="#0e2231" stroke-width="5"/><path d="M2,18.5 L9.5,11" stroke="#fff" stroke-width="3.2" stroke-linecap="round"/><path d="M2,18.5 L9.5,11" stroke="#56616b" stroke-width="1.6" stroke-linecap="round"/><path d="M5,10.3 L10,10.3 L10,15.5" fill="none" stroke="#8a949c" stroke-width="1.4"/></svg><svg style="position:absolute;left:1166px;top:307px;" width="20" height="20" viewBox="0 0 20 20"><rect x="0" y="3" width="20" height="2.2" fill="#0e2231"/><rect x="7" y="0.5" width="6" height="2.8" fill="#0e2231"/><path d="M1.5,5.8 L18.5,5.8 L18,18.5 Q18,20 16.5,20 L3.5,20 Q2,20 2,18.5 Z" fill="#0e2231"/><path d="M5.5,8.5 L5.5,17.5 M8.5,8.5 L8.5,17.5 M11.5,8.5 L11.5,17.5 M14.5,8.5 L14.5,17.5" stroke="#fff" stroke-width="1.1"/></svg><div style="position:absolute;left:1189px;top:307px;width:1px;height:20px;background:#555"></div><svg style="position:absolute;left:1194px;top:307px;" width="20" height="20" viewBox="0 0 20 20"><rect x="0" y="0" width="3" height="20" fill="#a8a8a8"/><path d="M17,2.5 L9,10 L17,17.5" fill="none" stroke="#a8a8a8" stroke-width="4.6" stroke-linecap="square"/></svg><svg style="position:absolute;left:1221px;top:307px;" width="14" height="20" viewBox="0 0 14 20"><path d="M11,2.5 L3,10 L11,17.5" fill="none" stroke="#a8a8a8" stroke-width="4.6" stroke-linecap="square"/></svg><svg style="position:absolute;left:1245px;top:307px;" width="14" height="20" viewBox="0 0 14 20"><path d="M2.5,2.5 L10.5,10 L2.5,17.5" fill="none" stroke="#a8a8a8" stroke-width="4.6" stroke-linecap="square"/></svg><svg style="position:absolute;left:1266px;top:307px;" width="19" height="20" viewBox="0 0 19 20"><path d="M2.5,2.5 L10.5,10 L2.5,17.5" fill="none" stroke="#a8a8a8" stroke-width="4.6" stroke-linecap="square"/><rect x="16" y="0" width="3" height="20" fill="#a8a8a8"/></svg><div style="position:absolute;left:1288px;top:307px;width:1px;height:20px;background:#555"></div><svg style="position:absolute;left:1296px;top:309px;" width="14" height="17" viewBox="0 0 14 17"><path d="M7,1.5 L7,16.5 M1,7.5 L7,1.5 L13,7.5" fill="none" stroke="#a8a8a8" stroke-width="2"/></svg><svg style="position:absolute;left:1320px;top:309px;" width="14" height="17" viewBox="0 0 14 17"><path d="M7,0.5 L7,15.5 M1,9.5 L7,15.5 L13,9.5" fill="none" stroke="#a8a8a8" stroke-width="2"/></svg><div style="position:absolute;left:1339px;top:307px;width:1px;height:20px;background:#555"></div><svg style="position:absolute;left:1342px;top:307px;" width="21" height="20" viewBox="0 0 21 20"><ellipse cx="10.5" cy="3.2" rx="9.6" ry="2.7" fill="none" stroke="#0e2231" stroke-width="1.8"/><path d="M0.8,3.4 L8.3,12 L8.3,19.5 L12.7,19.5 L12.7,12 L20.2,3.4 Q10.5,7.5 0.8,3.4 Z" fill="#0e2231"/><path d="M9,7.5 L12,10.5 M12,7.5 L9,10.5" stroke="#fff" stroke-width="0.9"/></svg><svg style="position:absolute;left:1367px;top:312px;" width="20" height="10" viewBox="0 0 20 10"><rect x="5.5" y="0.5" width="14.5" height="3.2" fill="#0e2231"/><rect x="0" y="5.5" width="13.5" height="3.2" fill="#0e2231"/></svg><svg style="position:absolute;left:1392px;top:307px;" width="19" height="21" viewBox="0 0 19 21"><path d="M1.2,16 L1.2,1.6 L9.2,1.6 L11.5,3.9" fill="none" stroke="#4a5660" stroke-width="1.5"/><path d="M4.3,4.7 L11.6,4.7 L16.3,9.4 L16.3,19.4 L4.3,19.4 Z" fill="#fff" stroke="#0e2231" stroke-width="1.6" stroke-linejoin="round"/><path d="M11.6,4.7 L11.6,9.4 L16.3,9.4" fill="none" stroke="#0e2231" stroke-width="1.3"/></svg><svg style="position:absolute;left:1415px;top:309px;" width="20" height="18" viewBox="0 0 20 18"><rect x="5.5" y="0.5" width="9" height="2.5" fill="#0e2231"/><rect x="0" y="4.5" width="20" height="9" rx="1.5" fill="#0e2231"/><rect x="5" y="10.5" width="10" height="7" fill="#fff" stroke="#0e2231" stroke-width="1.5"/><circle cx="2.8" cy="7.2" r="0.9" fill="#fff"/></svg><svg style="position:absolute;left:1441px;top:309px;" width="17" height="17" viewBox="0 0 17 17"><path d="M13.5,5.5 A6.5,6.5 0 0 0 2,7 M3,11.5 A6.5,6.5 0 0 0 14.5,10" fill="none" stroke="#0e2231" stroke-width="2.1"/><path d="M15.8,1.3 L15.8,7 L10.2,7 Z" fill="#0e2231"/><path d="M0.8,15.7 L0.8,10 L6.4,10 Z" fill="#0e2231"/></svg><svg style="position:absolute;left:1463px;top:307px;" width="21" height="21" viewBox="0 0 21 21"><path d="M6,10.2 L10.5,10.2 M10.5,2.7 L10.5,17.7 M10.5,2.7 L15,2.7 M10.5,10.2 L15,10.2 M10.5,17.7 L15,17.7" fill="none" stroke="#0e2231" stroke-width="2.4"/><rect x="1.4" y="7.9" width="4.8" height="4.6" rx="1" fill="#fff" stroke="#0e2231" stroke-width="1.9"/><rect x="14.6" y="0.5" width="4.8" height="4.4" rx="1" fill="#fff" stroke="#0e2231" stroke-width="1.9"/><rect x="14.6" y="7.9" width="4.8" height="4.6" rx="1" fill="#fff" stroke="#0e2231" stroke-width="1.9"/><rect x="14.6" y="15.4" width="4.8" height="4.6" rx="1" fill="#fff" stroke="#0e2231" stroke-width="1.9"/></svg><div style="position:absolute;left:1486px;top:307px;width:1px;height:20px;background:#555"></div><div class="t" style="left:1492.4px;top:311.89px;font-size:11px;color:#444;font-weight:400;letter-spacing:0.3px">Liste</div><svg style="position:absolute;left:1116px;top:338px;" width="48" height="46" viewBox="0 0 48 46"><defs><linearGradient id="dg" x1="0" y1="0" x2="1" y2="1"><stop offset="0" stop-color="#ffffff"/><stop offset="1" stop-color="#cfdcf3"/></linearGradient><linearGradient id="gg" x1="0" y1="0" x2="0" y2="1"><stop offset="0" stop-color="#f4f8f0"/><stop offset="1" stop-color="#dfe9d6"/></linearGradient></defs><path d="M10.5,0.5 L38.3,0.5 L46.5,8.2 L46.5,44.6 L10.5,44.6 Z" fill="url(#dg)" stroke="#8ea3c4" stroke-width="1"/><path d="M46.5,8.2 L46.5,44.6 L10.5,44.6" fill="none" stroke="#6f86ad" stroke-width="1.2"/><path d="M38.3,0.5 L38.3,8.2 L46.5,8.2 Z" fill="#dfe7f5" stroke="#8ea3c4" stroke-width="1"/><path d="M15.2,12.2 L39.6,12.2 M15.2,16.4 L39.6,16.4 M15.2,20.3 L39.6,20.3 M15.2,24.4 L39.6,24.4 M15.2,28.6 L39.6,28.6 M15.2,32.5 L39.6,32.5 M15.2,36.3 L39.6,36.3 M15.2,12.2 L15.2,36.3 M21.6,12.2 L21.6,36.3 M27.4,12.2 L27.4,36.3 M33.5,12.2 L33.5,36.3 M39.6,12.2 L39.6,36.3 " stroke="#a9c0e6" stroke-width="1" fill="none"/><rect x="25.5" y="30" width="4" height="5.3" fill="#fff" stroke="#8fa9d6" stroke-width="1"/><rect x="32.2" y="28" width="4" height="7.3" fill="#fff" stroke="#8fa9d6" stroke-width="1"/><path d="M23,35.6 L37.5,35.6" stroke="#8fa9d6" stroke-width="1.2"/><rect x="1.2" y="5.3" width="20.3" height="20.3" fill="url(#gg)" stroke="#4f8a3f" stroke-width="1.9"/><path d="M4.6,10.8 L17.8,20.2 M17.2,10.8 L5,19.8" stroke="#58b04e" stroke-width="3.4"/><path d="M4.2,21 L18.5,21" stroke="#2f6a2a" stroke-width="1"/><path d="M6,10.8 L16.5,19" stroke="#b9e3ad" stroke-width="0.9"/></svg><svg style="position:absolute;left:1116px;top:12px;" width="163" height="76" viewBox="0 0 163 76"><g style="filter:drop-shadow(2px 3px 2px rgba(0,0,0,0.35))"><path d="M143.0,20.0 L32.5,52.3" stroke="#980000" stroke-width="1.9"/><path d="M20.0,56.0 L31.3,48.3 L33.7,56.4 Z" fill="#980000"/></g></svg><svg style="position:absolute;left:317px;top:118px;" width="66.5" height="66" viewBox="0 0 66.5 66"><g style="filter:drop-shadow(2px 3px 2px rgba(0,0,0,0.35))"><path d="M20.0,20.0 L38.6,38.3" stroke="#980000" stroke-width="2.1"/><path d="M46.5,46.0 L35.7,41.3 L41.6,35.3 Z" fill="#980000"/></g></svg><svg style="position:absolute;left:238px;top:332px;" width="64" height="64" viewBox="0 0 64 64"><g style="filter:drop-shadow(2px 3px 2px rgba(0,0,0,0.35))"><path d="M20.0,20.0 L36.9,36.9" stroke="#980000" stroke-width="1.9"/><path d="M44.0,44.0 L34.2,39.6 L39.6,34.2 Z" fill="#980000"/></g></svg><svg style="position:absolute;left:1162px;top:77px;" width="14" height="22" viewBox="0 0 14 22"><path d="M0.5,0.5 L0.5,16.6 L4.4,12.8 L7,19.2 L9.4,18.3 L6.9,12.2 L11.7,12.2 Z" fill="#fff" stroke="#222" stroke-width="1" stroke-linejoin="round"/></svg><svg style="position:absolute;left:1549px;top:198px;" width="14" height="22" viewBox="0 0 14 22"><path d="M0.5,0.5 L0.5,16.6 L4.4,12.8 L7,19.2 L9.4,18.3 L6.9,12.2 L11.7,12.2 Z" fill="#fff" stroke="#222" stroke-width="1" stroke-linejoin="round"/></svg>
</body></html>
